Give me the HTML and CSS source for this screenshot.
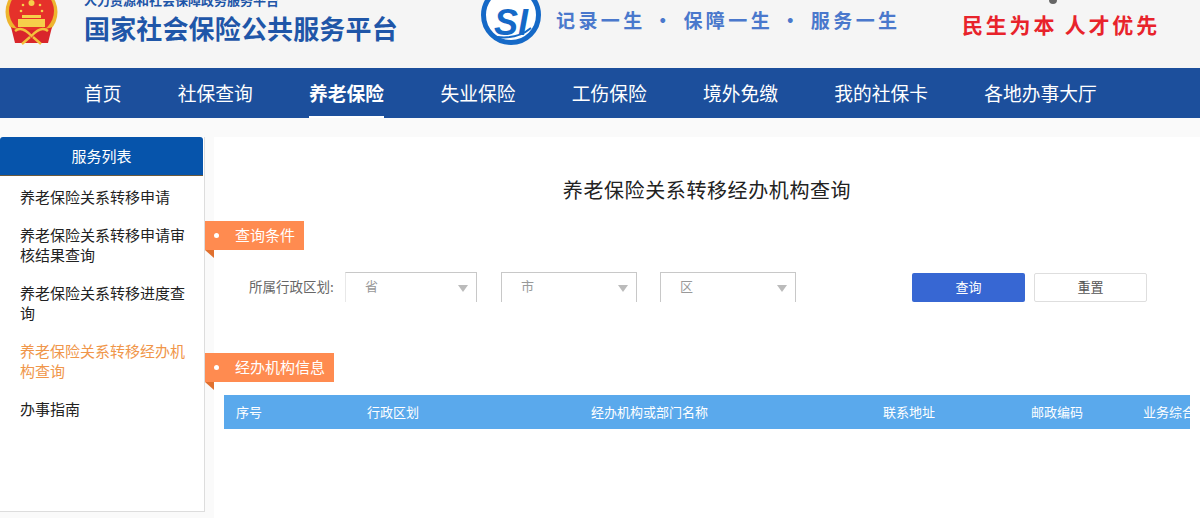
FILE: index.html
```html
<!DOCTYPE html>
<html lang="zh-CN">
<head>
    <meta charset="UTF-8">
    <title>养老保险关系转移经办机构查询</title>
    <link rel="stylesheet" href="styles.css">
</head>

<body>

<div class="app-container">
    <div class="header">
        <svg class="emblem" width="54" height="50" viewBox="0 0 54 50">
            <circle cx="26.5" cy="17" r="26" fill="#eeb52e"/>
            <circle cx="26.5" cy="16" r="22.5" fill="#e5312a"/>
            <g fill="#f6d04a">
                <circle cx="26.5" cy="8" r="3"/>
                <circle cx="18" cy="10" r="1.3"/>
                <circle cx="35" cy="10" r="1.3"/>
                <circle cx="16" cy="16" r="1.3"/>
                <circle cx="37" cy="16" r="1.3"/>
                <rect x="17" y="20" width="19" height="3"/>
                <rect x="13" y="24" width="27" height="8"/>
            </g>
            <path d="M6 32 C13 36 40 36 47 32 L43 48 H10 Z" fill="#d9262b"/>
            <path d="M10 36 C16 31 22 36 26.5 41 C31 36 37 31 43 36 M17 49 L25 42 M36 49 L28 42" fill="none" stroke="#f3c13c" stroke-width="2.4"/>
        </svg>
        <div class="brand">
            <div class="brand-sub">人力资源和社会保障政务服务平台</div>
            <div class="brand-title">国家社会保险公共服务平台</div>
        </div>
        <svg class="si-logo" width="62" height="46" viewBox="0 0 62 46">
            <circle cx="30" cy="15" r="27.5" fill="#fff" stroke="#1569c7" stroke-width="5"/>
            <path d="M10 36 C24 39 38 38 50 28" fill="none" stroke="#1569c7" stroke-width="2"/>
            <text x="30" y="35" text-anchor="middle" class="si-text">SI</text>
        </svg>
        <div class="slogan">记录一生 · 保障一生 · 服务一生</div>
        <div class="motto">民生为本 人才优先</div>
        <span class="top-dot"></span>
    </div>

    <div class="nav">
        <a class="nav-item">首页</a>
        <a class="nav-item">社保查询</a>
        <a class="nav-item active">养老保险</a>
        <a class="nav-item">失业保险</a>
        <a class="nav-item">工伤保险</a>
        <a class="nav-item">境外免缴</a>
        <a class="nav-item">我的社保卡</a>
        <a class="nav-item">各地办事大厅</a>
    </div>

    <div class="page">
        <div class="sidebar">
            <div class="sidebar-title">服务列表</div>
            <ul class="side-list">
                <li>养老保险关系转移申请</li>
                <li>养老保险关系转移申请审核结果查询</li>
                <li>养老保险关系转移进度查询</li>
                <li class="current">养老保险关系转移经办机构查询</li>
                <li>办事指南</li>
            </ul>
        </div>

        <div class="content">
            <h1 class="page-title">养老保险关系转移经办机构查询</h1>

            <div class="tag tag-query">查询条件</div>
            <div class="query-row">
                <label class="query-label">所属行政区划:</label>
                <div class="select select-a">省</div>
                <div class="select select-b">市</div>
                <div class="select select-b">区</div>
                <button class="btn btn-primary">查询</button>
                <button class="btn btn-plain">重置</button>
            </div>

            <div class="tag tag-info">经办机构信息</div>
            <div class="table-head">
                <span class="col-no">序号</span>
                <span class="col-area">行政区划</span>
                <span class="col-name">经办机构或部门名称</span>
                <span class="col-addr">联系地址</span>
                <span class="col-post">邮政编码</span>
                <span class="col-biz">业务综合柜员</span>
            </div>
        </div>
    </div>
</div>

</body>
</html>
```

FILE: styles.css
```css
:root {
    --cjk-font: "Noto Sans CJK SC", "Liberation Sans", sans-serif;
    --nav-blue: #1c4f9c;
    --tag-orange: #ff8b50;
}

html, body {
    margin: 0;
    height: 518px;
    overflow: hidden;
}

body {
    background-color: #fafafa;
    color: #000000;
    font-family: var(--cjk-font);
}

.app-container {
    height: 518px;
    overflow: hidden;
}

/* top banner */
.header {
    height: 68px;
    background-color: #f5f5f5;
    display: flex;
    align-items: flex-start;
    overflow: hidden;
    position: relative;
}

.emblem {
    margin: -5px 0 0 5px;
    flex: none;
}

.brand {
    margin: -9px 0 0 25px;
    width: 340px;
    color: #1f56a8;
    font-weight: bold;
}

.brand-sub {
    font-size: 13px;
    line-height: 18px;
}

.brand-title {
    font-size: 26px;
    line-height: 38px;
    letter-spacing: 0.15px;
    white-space: nowrap;
}

.si-logo {
    flex: none;
    margin-left: 57px;
}

.si-text {
    font-family: "Liberation Sans", sans-serif;
    font-size: 36px;
    font-weight: bold;
    font-style: italic;
    fill: #1569c7;
}

.slogan {
    margin: 7px 0 0 13px;
    width: 406px;
    font-size: 19px;
    font-weight: bold;
    line-height: 26px;
    letter-spacing: 3.4px;
    color: #4a78cc;
    white-space: nowrap;
}

.motto {
    margin-top: 10px;
    font-size: 21px;
    line-height: 28px;
    font-weight: bold;
    letter-spacing: 2.8px;
    color: #e8232b;
    white-space: nowrap;
}

.top-dot {
    position: absolute;
    left: 1049px;
    top: -4px;
    width: 8px;
    height: 8px;
    border-radius: 50%;
    background-color: #666666;
}

/* main navigation */
.nav {
    height: 50px;
    padding-left: 84px;
    background-color: var(--nav-blue);
    display: flex;
    gap: 56.3px;
}

.nav-item {
    color: #ffffff;
    font-size: 18.75px;
    line-height: 50px;
    height: 50px;
    box-sizing: border-box;
    white-space: nowrap;
}

.nav-item.active {
    font-weight: bold;
    border-bottom: 2px solid #ffffff;
}

/* page body */
.page {
    display: flex;
    align-items: flex-start;
    padding-top: 19px;
}

.sidebar {
    width: 205px;
    height: 375px;
    flex: none;
    box-sizing: border-box;
    background-color: #ffffff;
    border-right: 1px solid #dddddd;
    border-bottom: 1px solid #dddddd;
}

.sidebar-title {
    height: 39px;
    width: 203px;
    box-sizing: border-box;
    background-color: #0654ab;
    border-bottom: 1px solid #6b5a3c;
    border-radius: 3px 3px 0 0;
    color: #ffffff;
    font-size: 15px;
    line-height: 38px;
    text-align: center;
}

.side-list {
    list-style: none;
    margin: 0;
    padding: 11px 18px 0 20px;
    font-size: 15px;
    line-height: 20px;
    color: #222222;
}

.side-list li {
    margin-bottom: 18px;
}

.side-list .current {
    color: #f0964a;
}

.content {
    flex: 1;
    height: 400px;
    margin-left: 9px;
    background-color: #ffffff;
}

.page-title {
    margin: 0;
    padding-top: 39px;
    font-size: 20px;
    font-weight: normal;
    line-height: 28px;
    letter-spacing: 0.6px;
    text-align: center;
    color: #222222;
}

.tag {
    position: relative;
    height: 29px;
    margin-left: -9px;
    box-sizing: border-box;
    padding-left: 30px;
    background-color: var(--tag-orange);
    color: #ffffff;
    font-size: 15px;
    line-height: 28px;
}

.tag:before {
    content: "";
    position: absolute;
    left: 9px;
    top: 12px;
    width: 5px;
    height: 5px;
    border-radius: 50%;
    background-color: #ffffff;
}

.tag:after {
    content: "";
    position: absolute;
    left: 0;
    top: 29px;
    border-top: 8px solid #e0702f;
    border-left: 9px solid transparent;
}

.tag-query {
    width: 99px;
    margin-top: 17px;
}

.tag-info {
    width: 129px;
    margin-top: 51px;
}

.query-row {
    display: flex;
    align-items: flex-start;
    margin-top: 22px;
    padding-left: 35px;
    height: 30px;
}

.query-label {
    width: 96px;
    font-size: 13.5px;
    line-height: 28px;
    color: #666666;
    white-space: nowrap;
}

.select {
    position: relative;
    height: 30px;
    box-sizing: border-box;
    border: 1px solid #c8c8c8;
    border-bottom: 0;
    padding-left: 19px;
    font-size: 13px;
    line-height: 26px;
    color: #999999;
}

.select:after {
    content: "";
    position: absolute;
    right: 8px;
    top: 12px;
    border-top: 7px solid #bbbbbb;
    border-left: 5px solid transparent;
    border-right: 5px solid transparent;
}

.select-a {
    width: 132px;
    border-left-color: #e8e8e8;
    margin-right: 24px;
}

.select-b {
    width: 136px;
    margin-right: 23px;
}

.select-b + .select-b {
    margin-right: 116px;
}

.btn {
    width: 113px;
    height: 29px;
    box-sizing: border-box;
    border-radius: 2px;
    font-family: var(--cjk-font);
    font-size: 13px;
    padding: 0 0 2px;
    margin-top: 1px;
}

.btn-primary {
    background-color: #3767d3;
    border: 0;
    color: #ffffff;
    margin-right: 9px;
}

.btn-plain {
    background-color: #ffffff;
    border: 1px solid #dedede;
    color: #555555;
}

.table-head {
    display: flex;
    width: 966px;
    height: 34px;
    margin: 13px 0 0 10px;
    background-color: #5aa9ec;
    color: #ffffff;
    font-size: 13px;
    line-height: 33px;
    overflow: hidden;
    white-space: nowrap;
}

.table-head span {
    flex: none;
}

.col-no { width: 131px; padding-left: 12px; }
.col-area { width: 224px; }
.col-name { width: 292px; }
.col-addr { width: 148px; }
.col-post { width: 112px; }
.col-biz { width: 60px; }
```
